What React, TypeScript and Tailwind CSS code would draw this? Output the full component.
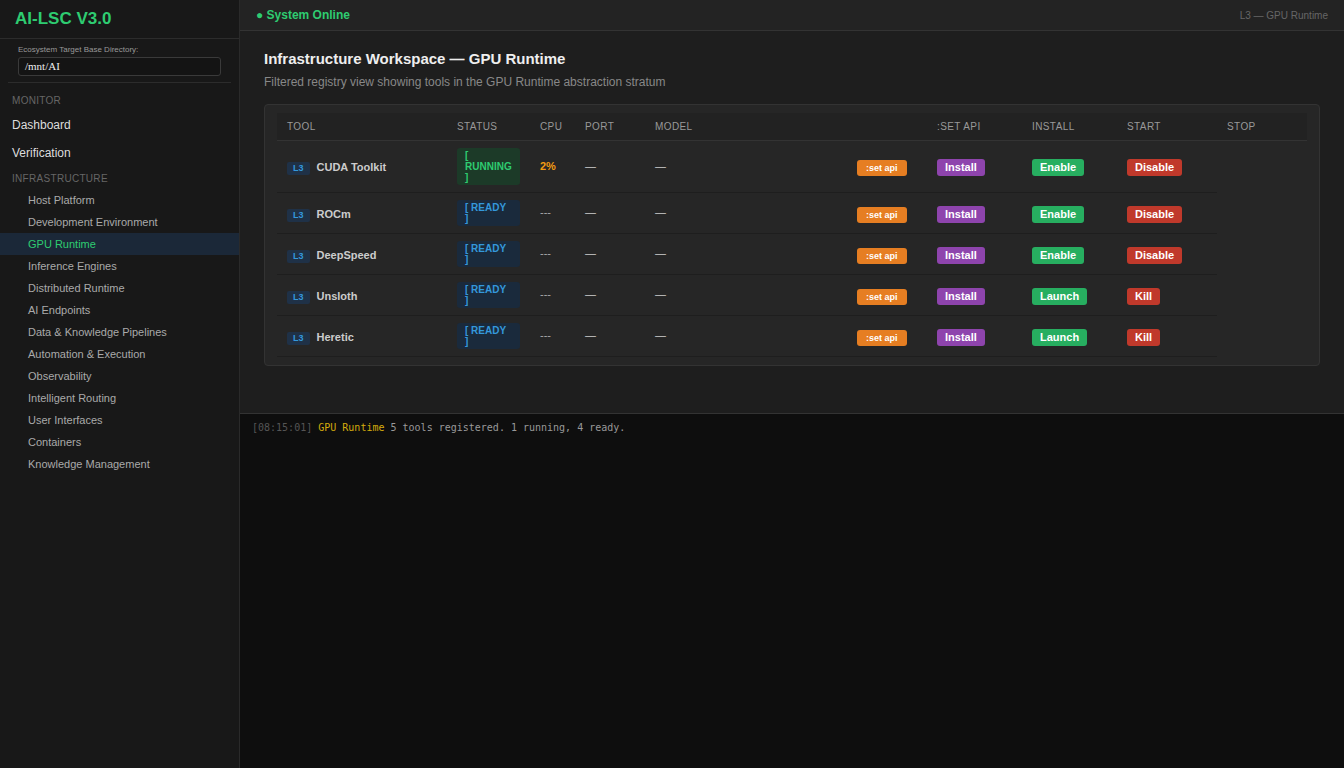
import React from "react";

const navItems = [
  "Host Platform",
  "Development Environment",
  "GPU Runtime",
  "Inference Engines",
  "Distributed Runtime",
  "AI Endpoints",
  "Data & Knowledge Pipelines",
  "Automation & Execution",
  "Observability",
  "Intelligent Routing",
  "User Interfaces",
  "Containers",
  "Knowledge Management",
];

type Row = {
  name: string;
  running: boolean;
  cpu: string;
  start: string;
  stop: string;
};

const rows: Row[] = [
  { name: "CUDA Toolkit", running: true, cpu: "2%", start: "Enable", stop: "Disable" },
  { name: "ROCm", running: false, cpu: "---", start: "Enable", stop: "Disable" },
  { name: "DeepSpeed", running: false, cpu: "---", start: "Enable", stop: "Disable" },
  { name: "Unsloth", running: false, cpu: "---", start: "Launch", stop: "Kill" },
  { name: "Heretic", running: false, cpu: "---", start: "Launch", stop: "Kill" },
];

function Btn({ label, color }: { label: string; color: string }) {
  return (
    <span
      className={`inline-block rounded-[3px] px-[8px] py-[2px] text-[11px] font-bold leading-[13px] text-white ${color}`}
    >
      {label}
    </span>
  );
}

export default function App() {
  return (
    <div
      className="flex h-[768px] w-[1344px] overflow-hidden bg-[#1e1e1e] text-[#ddd]"
      style={{ fontFamily: '"Liberation Sans", Arial, sans-serif' }}
    >
      {/* Sidebar */}
      <aside className="flex w-[240px] shrink-0 flex-col border-r border-[#2a2a2a] bg-[#181818]">
        <div className="flex h-[39px] items-center border-b border-[#2c2c2c] px-[15px]">
          <span className="text-[17px] font-bold text-[#2ecc71]">AI-LSC V3.0</span>
        </div>
        <div className="mx-[8px] border-b border-[#2c2c2c] px-[10px] pb-[6px] pt-[6px]">
          <div className="text-[8px] leading-[10px] text-[#999]">Ecosystem Target Base Directory:</div>
          <div
            className="mt-[2px] flex h-[19px] items-center rounded-[3px] border border-[#3a3a3a] bg-[#141414] px-[6px] text-[11px] text-[#eee]"
            style={{ fontFamily: '"Liberation Serif", "Times New Roman", serif' }}
          >
            /mnt/AI
          </div>
        </div>
        <div className="px-[12px] pt-[12px] text-[10px] uppercase leading-[12px] tracking-[0.3px] text-[#666]">
          Monitor
        </div>
        <div className="mt-[4px] flex h-[28px] items-center px-[12px] text-[12px] text-[#ddd]">Dashboard</div>
        <div className="flex h-[28px] items-center px-[12px] text-[12px] text-[#ddd]">Verification</div>
        <div className="px-[12px] pt-[6px] text-[10px] uppercase leading-[12px] tracking-[0.3px] text-[#666]">
          Infrastructure
        </div>
        <div className="mt-[4px] flex flex-col">
          {navItems.map((n) => (
            <div
              key={n}
              className={`flex h-[22px] items-center pl-[28px] text-[11px] ${
                n === "GPU Runtime" ? "bg-[#1b2838] text-[#2ecc71]" : "text-[#aaa]"
              }`}
            >
              {n}
            </div>
          ))}
        </div>
      </aside>

      {/* Main */}
      <main className="flex min-w-0 flex-1 flex-col">
        <header className="flex h-[31px] shrink-0 items-center justify-between border-b border-[#333] bg-[#232323] pl-[16px] pr-[16px]">
          <span className="text-[12px] font-bold text-[#2ecc71]">● System Online</span>
          <span className="text-[10px] text-[#666]">L3 — GPU Runtime</span>
        </header>

        <section className="flex-1 px-[24px] pt-[19px]">
          <h1 className="text-[15px] font-bold leading-[18px] text-[#eee]">
            Infrastructure Workspace — GPU Runtime
          </h1>
          <p className="mt-[7px] text-[12px] leading-[14px] text-[#888]">
            Filtered registry view showing tools in the GPU Runtime abstraction stratum
          </p>

          <div className="mt-[15px] rounded-[4px] border border-[#333] bg-[#262626] px-[12px] pb-[8px] pt-[8px]">
            <table className="w-[1030px] table-fixed border-collapse text-left">
              <colgroup>
                <col className="w-[170px]" />
                <col className="w-[83px]" />
                <col className="w-[45px]" />
                <col className="w-[70px]" />
                <col className="w-[202px]" />
                <col className="w-[80px]" />
                <col className="w-[95px]" />
                <col className="w-[95px]" />
                <col className="w-[100px]" />
                <col className="w-[90px]" />
              </colgroup>
              <thead>
                <tr className="bg-[#222]">
                  {["Tool", "Status", "CPU", "Port", "Model", "", ":set api", "Install", "Start", "Stop"].map(
                    (h, i) => (
                      <th
                        key={i}
                        className="h-[27px] border-b border-[#333] px-[10px] text-[10px] font-normal uppercase tracking-[0.4px] text-[#999]"
                      >
                        {h}
                      </th>
                    )
                  )}
                </tr>
              </thead>
              <tbody>
                {rows.map((r) => (
                  <tr key={r.name}>
                    <td className="border-b border-[#1e1e1e] px-[10px] py-[7px]">
                      <span className="inline-block rounded-[2px] bg-[#1f3147] px-[6px] text-[9px] font-bold leading-[13px] text-[#3498db]">
                        L3
                      </span>
                      <span className="ml-[7px] text-[11px] font-bold text-[#ccc]">{r.name}</span>
                    </td>
                    <td className="border-b border-[#1e1e1e] px-[10px] py-[7px]">
                      <span
                        className={`block w-[63px] rounded-[3px] px-[8px] py-[2px] text-[10px] font-bold leading-[11px] ${
                          r.running ? "bg-[#1c3a28] text-[#2ecc71]" : "bg-[#1a2a3c] text-[#3498db]"
                        }`}
                      >
                        {r.running ? "[ RUNNING ]" : "[ READY ]"}
                      </span>
                    </td>
                    <td
                      className={`border-b border-[#1e1e1e] px-[10px] text-[11px] ${
                        r.running ? "font-bold text-[#f39c12]" : "text-[#aaa]"
                      }`}
                    >
                      {r.cpu}
                    </td>
                    <td className="border-b border-[#1e1e1e] px-[10px] text-[11px] text-[#ccc]">—</td>
                    <td className="border-b border-[#1e1e1e] px-[10px] text-[11px] text-[#ccc]">—</td>
                    <td className="border-b border-[#1e1e1e] px-[10px]">
                      <span className="inline-block rounded-[3px] bg-[#e67e22] px-[9px] py-[2px] text-[9px] font-bold leading-[12px] text-white">
                        :set api
                      </span>
                    </td>
                    <td className="border-b border-[#1e1e1e] px-[10px]">
                      <Btn label="Install" color="bg-[#8e44ad]" />
                    </td>
                    <td className="border-b border-[#1e1e1e] px-[10px]">
                      <Btn label={r.start} color="bg-[#27ae60]" />
                    </td>
                    <td className="border-b border-[#1e1e1e] px-[10px]">
                      <Btn label={r.stop} color="bg-[#c0392b]" />
                    </td>
                  </tr>
                ))}
              </tbody>
            </table>
          </div>
        </section>

        <footer
          className="h-[355px] shrink-0 border-t border-[#333] bg-[#0e0e0e] px-[12px] pt-[8px] text-[10px] leading-[12px]"
          style={{ fontFamily: '"DejaVu Sans Mono", "Liberation Mono", monospace' }}
        >
          <span className="text-[#555]">[08:15:01]</span>{" "}
          <span className="text-[#d4ac0d]">GPU Runtime</span>{" "}
          <span className="text-[#999]">5 tools registered. 1 running, 4 ready.</span>
        </footer>
      </main>
    </div>
  );
}
